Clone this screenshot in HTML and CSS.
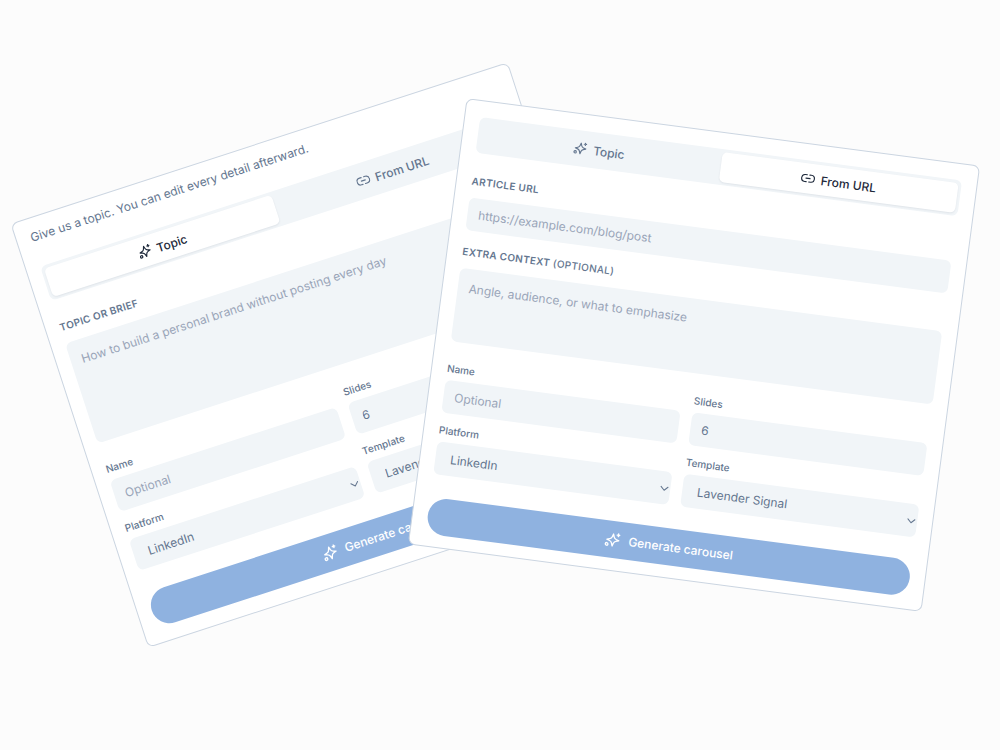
FILE: index.html
```html
<!DOCTYPE html>
<html lang="en">
<head>
    <meta charset="UTF-8">
    <meta name="viewport" content="width=device-width, initial-scale=1.0">
    <title>Create Carousel</title>
    <link rel="stylesheet" href="styles.css">
</head>
<body>
    <svg class="symbols" aria-hidden="true">
        <symbol id="icon-sparkles" viewBox="0 0 24 24">
            <path d="M13 3l1.400 4.200c.6 1.800 1.600 2.800 3.400 3.400L22 12l-4.200 1.400c-1.800.6-2.800 1.600-3.400 3.400L13 21l-1.400-4.200c-.6-1.800-1.600-2.800-3.400-3.400L4 12l4.200-1.400c1.800-.6 2.800-1.600 3.400-3.400z"/>
            <path d="M20.500 2v4M18.500 4h4"/>
            <circle cx="4.500" cy="19" r="2"/>
        </symbol>
        <symbol id="icon-link" viewBox="0 0 24 24">
            <path d="M9.500 18H7A6 6 0 0 1 7 6h3"/>
            <path d="M14.500 6H17a6 6 0 0 1 0 12h-3"/>
            <path d="M8.500 12h7"/>
        </symbol>
        <symbol id="icon-chevron" viewBox="0 0 10 10">
            <path d="M1.500 3.500L5 7l3.500-3.500"/>
        </symbol>
    </svg>
    <main class="canvas">
        <form class="card card-topic">
            <p class="intro">Give us a topic. You can edit every detail afterward.</p>
            <div class="tabs">
                <button type="button" class="tab active"><svg class="icon"><use href="#icon-sparkles"/></svg>Topic</button>
                <button type="button" class="tab"><svg class="icon"><use href="#icon-link"/></svg>From URL</button>
            </div>
            <label class="section-label" for="brief">TOPIC OR BRIEF</label>
            <textarea id="brief" class="field area-tall" placeholder="How to build a personal brand without posting every day"></textarea>
            <div class="options">
                <div class="option">
                    <label for="name1">Name</label>
                    <input type="text" id="name1" class="field" placeholder="Optional">
                </div>
                <div class="option">
                    <label for="slides1">Slides</label>
                    <input type="number" id="slides1" class="field" value="6">
                </div>
                <div class="option">
                    <label for="platform1">Platform</label>
                    <div class="select-wrap">
                        <select id="platform1" class="field"><option>LinkedIn</option></select>
                        <svg class="chevron"><use href="#icon-chevron"/></svg>
                    </div>
                </div>
                <div class="option">
                    <label for="template1">Template</label>
                    <div class="select-wrap">
                        <select id="template1" class="field"><option>Lavender Signal</option></select>
                        <svg class="chevron"><use href="#icon-chevron"/></svg>
                    </div>
                </div>
            </div>
            <button type="button" class="generate"><svg class="icon"><use href="#icon-sparkles"/></svg>Generate carousel</button>
        </form>

        <form class="card card-url">
            <div class="tabs">
                <button type="button" class="tab"><svg class="icon"><use href="#icon-sparkles"/></svg>Topic</button>
                <button type="button" class="tab active"><svg class="icon"><use href="#icon-link"/></svg>From URL</button>
            </div>
            <label class="section-label" for="url">ARTICLE URL</label>
            <input type="url" id="url" class="field" placeholder="https://example.com/blog/post">
            <label class="section-label context-label" for="context">EXTRA CONTEXT <span>(OPTIONAL)</span></label>
            <textarea id="context" class="field area-short" placeholder="Angle, audience, or what to emphasize"></textarea>
            <div class="options">
                <div class="option">
                    <label for="name2">Name</label>
                    <input type="text" id="name2" class="field" placeholder="Optional">
                </div>
                <div class="option">
                    <label for="slides2">Slides</label>
                    <input type="number" id="slides2" class="field" value="6">
                </div>
                <div class="option">
                    <label for="platform2">Platform</label>
                    <div class="select-wrap">
                        <select id="platform2" class="field"><option>LinkedIn</option></select>
                        <svg class="chevron"><use href="#icon-chevron"/></svg>
                    </div>
                </div>
                <div class="option">
                    <label for="template2">Template</label>
                    <div class="select-wrap">
                        <select id="template2" class="field"><option>Lavender Signal</option></select>
                        <svg class="chevron"><use href="#icon-chevron"/></svg>
                    </div>
                </div>
            </div>
            <button type="button" class="generate"><svg class="icon"><use href="#icon-sparkles"/></svg>Generate carousel</button>
        </form>
    </main>
</body>
</html>
```
FILE: styles.css
```css
* {
    box-sizing: border-box;
}
body {
    margin: 0;
    background-color: #fcfcfc;
    color: #64768f;
    font-family: Inter, "Open Sans", sans-serif;
    font-size: 12px;
}
button, input, select, textarea {
    font: inherit;
    color: inherit;
    border: none;
    margin: 0;
}
button {
    cursor: pointer;
}
.symbols {
    display: none;
}
.icon, .chevron {
    fill: none;
    stroke: currentColor;
    stroke-width: 2;
    stroke-linecap: round;
    stroke-linejoin: round;
}
.icon {
    width: 14px;
    height: 14px;
    overflow: visible;
}
.canvas {
    position: relative;
    min-height: 100vh;
    overflow: hidden;
}

/* Tilted cards */
.card {
    position: absolute;
    top: 47.3%;
    display: flex;
    flex-direction: column;
    padding: 16px 15px 12px;
    background-color: #fff;
    border: 1px solid #cbd5e1;
    border-radius: 7px;
}
.card-topic {
    left: 32.8%;
    width: 52.3%;
    padding: 9px 20px 15px 14px;
    transform: translate(-50%, -50%) rotate(-18deg);
}
.card-url {
    left: 69.4%;
    width: 51.8%;
    transform: translate(-50%, -50%) rotate(7.5deg);
}
.intro {
    margin: 0 0 20px;
    line-height: 20px;
}

/* Tabs */
.tabs {
    display: grid;
    grid-template-columns: 1fr 1fr;
    gap: 3px;
    padding: 3px;
    background-color: #f1f5f8;
    border-radius: 6px;
}
.tab {
    display: flex;
    align-items: center;
    justify-content: center;
    gap: 6px;
    height: 30px;
    padding: 0;
    background: none;
    border-radius: 5px;
    font-weight: 500;
}
.tab.active {
    background-color: #fff;
    color: #1e293b;
    box-shadow: 0 1px 2px rgba(30, 41, 59, 0.08);
}

/* Fields */
.section-label {
    margin: 20px 0 9px;
    font-size: 10px;
    font-weight: 600;
    line-height: 16px;
    letter-spacing: 0.03em;
}
.context-label {
    margin-top: 13px;
}
.section-label span {
    font-weight: 500;
}
.field {
    display: block;
    width: 100%;
    height: 33px;
    padding: 0 11px;
    background-color: #f1f5f8;
    border-radius: 6px;
    outline: none;
}
.field::placeholder {
    color: #9aa5b8;
    opacity: 1;
}
textarea.field {
    padding: 10px 11px;
    line-height: 20px;
    resize: none;
}
.area-tall {
    height: 105px;
}
.area-short {
    height: 74px;
}
input[type="number"] {
    appearance: textfield;
}
select.field {
    appearance: none;
    padding: 0 20px 0 15px;
}
.options {
    display: grid;
    grid-template-columns: 1fr 1fr;
    gap: 9px 12px;
    margin-top: 19px;
}
.option label {
    display: block;
    margin-bottom: 4px;
    font-size: 10px;
    font-weight: 500;
    line-height: 16px;
}
.select-wrap {
    display: grid;
    align-items: center;
}
.select-wrap > * {
    grid-area: 1 / 1;
}
.chevron {
    justify-self: end;
    width: 10px;
    height: 10px;
    margin-right: 1px;
    stroke-width: 1;
    pointer-events: none;
}

/* Submit */
.generate {
    display: flex;
    align-items: center;
    justify-content: center;
    gap: 8px;
    height: 37px;
    margin-top: 23px;
    padding: 0;
    background-color: #8fb2e0;
    border-radius: 999px;
    color: #fff;
    font-weight: 500;
}
.generate .icon {
    width: 16px;
    height: 16px;
}
```
